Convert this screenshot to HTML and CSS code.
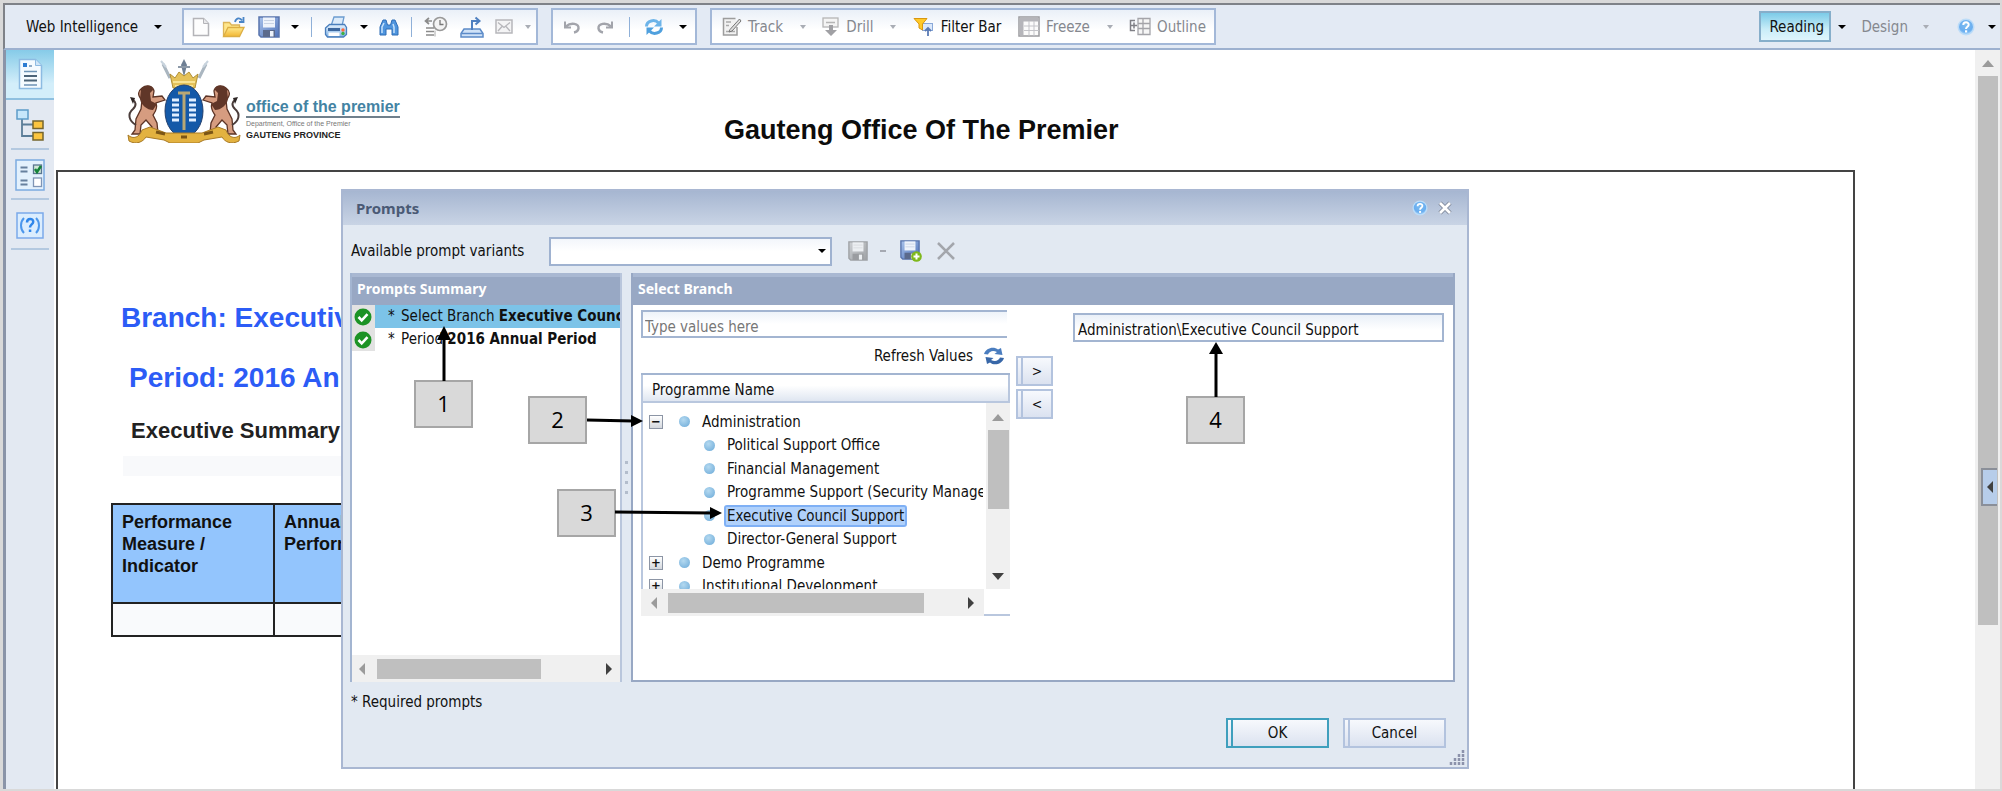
FILE: index.html
```html
<!DOCTYPE html>
<html lang="en">
<head>
    <meta charset="UTF-8">
    <meta name="viewport" content="width=device-width, initial-scale=1.0">
    <title>Web Intelligence</title>
    <link rel="stylesheet" href="styles.css">
</head>
<body>
    <svg class="defs" aria-hidden="true">
        <defs>
            <linearGradient id="blueFill" x1="0" y1="0" x2="0" y2="1">
                <stop offset="0" stop-color="#e4f1fd"/>
                <stop offset="1" stop-color="#7fb2e6"/>
            </linearGradient>
            <linearGradient id="goldFill" x1="0" y1="0" x2="0" y2="1">
                <stop offset="0" stop-color="#ffe98c"/>
                <stop offset="1" stop-color="#f2b632"/>
            </linearGradient>
            <linearGradient id="floppyFill" x1="0" y1="0" x2="1" y2="1">
                <stop offset="0" stop-color="#a9c3ec"/>
                <stop offset="1" stop-color="#4f72b8"/>
            </linearGradient>
            <radialGradient id="helpFill" cx="0.5" cy="0.35" r="0.7">
                <stop offset="0" stop-color="#7dbcf0"/>
                <stop offset="0.7" stop-color="#6aaef0"/>
                <stop offset="1" stop-color="#b5dcfb"/>
            </radialGradient>
        </defs>
        <symbol id="help" viewBox="0 0 18 18">
            <circle cx="9" cy="9" r="8.5" fill="#bcdcf8"/>
            <circle cx="9" cy="9" r="7" fill="url(#helpFill)"/>
            <path d="M6.3 7c0-3.6 5.6-3.4 5.4-.2C11.6 8.800 9 8.800 9 11" fill="none" stroke="#fff" stroke-width="2"/>
            <rect x="8" y="12.300" width="2.200" height="2.200" fill="#fff"/>
        </symbol>
        <symbol id="check" viewBox="0 0 18 18">
            <circle cx="9" cy="9" r="8.500" fill="#1c9325"/>
            <path d="M4.500 9l3.200 3.300L13.500 6.200" fill="none" stroke="#fff" stroke-width="2.600"/>
        </symbol>
        <symbol id="floppy" viewBox="0 0 22 22">
            <path d="M1 1h20v20H3l-2-2z" fill="url(#floppyFill)" stroke="#5874ad" stroke-width="1.500"/>
            <rect x="5" y="1.500" width="12" height="10" fill="#eef3fb"/>
            <path d="M6 4.500h10M6 7.500h10" stroke="#c9d3e4"/>
            <rect x="5" y="14" width="12" height="7" fill="#5b6a8c"/>
            <rect x="12" y="15" width="3.500" height="5.500" fill="#eef3fb"/>
        </symbol>
    </svg>

    <div class="app">
        <header class="toolbar">
            <button class="menu-button">Web Intelligence <span class="caret"></span></button>

            <div class="group group-file">
                <button class="tool" aria-label="New">
                    <svg width="18" height="20" viewBox="0 0 18 20"><path d="M1.500 1.500h10l5 5v12h-15z" fill="#fdfdfd" stroke="#b4b4b8" stroke-width="1.500"/><path d="M11.500 1.500v5h5" fill="#e8e8ea" stroke="#b4b4b8"/></svg>
                </button>
                <button class="tool" aria-label="Open">
                    <svg width="24" height="22" viewBox="0 0 24 22"><path d="M1.500 20V6.500h6l2 2.500h8v3" fill="#ffe68a" stroke="#dcb458" stroke-width="1.300"/><path d="M1.500 20.500l4.500-9h16l-4.500 9z" fill="url(#goldFill)" stroke="#dcae44" stroke-width="1.300"/><path d="M13 6c1-4 5-5 7-1.500M21.500 1v5h-4.500" fill="none" stroke="#4a86c8" stroke-width="1.800"/></svg>
                </button>
                <button class="tool" aria-label="Save"><svg width="22" height="22"><use href="#floppy"/></svg></button>
                <button class="tool tool-caret" aria-label="Save options"><span class="caret"></span></button>
                <span class="sep"></span>
                <button class="tool" aria-label="Print">
                    <svg width="24" height="22" viewBox="0 0 24 22"><path d="M7 10l3-9h10l-2 9z" fill="#dcebfa" stroke="#6b9cd0" stroke-width="1.300"/><path d="M1.500 12l4-3.500h15l2 3v7l-3 2.500H3.500l-2-2.500z" fill="url(#blueFill)" stroke="#4a7fbd" stroke-width="1.300"/><rect x="4" y="12" width="12" height="3" fill="#3d689f"/><rect x="4.500" y="16.500" width="11" height="3.500" fill="#fff"/><circle cx="19" cy="14" r="1.700" fill="#ff6a3c"/><circle cx="19" cy="17.500" r="1.700" fill="#3cb043"/></svg>
                </button>
                <button class="tool tool-caret" aria-label="Print options"><span class="caret"></span></button>
                <button class="tool" aria-label="Find">
                    <svg width="20" height="18" viewBox="0 0 20 18"><path d="M1 17V9l3-7h3l1.500 5h3L13 2h3l3 7v8h-6v-6H7v6z" fill="#4f95de" stroke="#2f6cb5"/><path d="M3 15V9l2-4M15 15V9l-1-3" stroke="#c7e2fb" stroke-width="1.500" fill="none"/></svg>
                </button>
                <span class="sep"></span>
                <button class="tool" aria-label="History">
                    <svg width="24" height="22" viewBox="0 0 24 22"><circle cx="16" cy="8" r="6.500" fill="#f4f4f4" stroke="#999" stroke-width="1.700"/><path d="M16 4v4.500h3.500" fill="none" stroke="#777" stroke-width="1.300"/><path d="M1 5h7M5 2L1.500 5 5 8M2 12h8M2 15.500h8M2 19h8" fill="none" stroke="#8b8b8b" stroke-width="1.700"/><path d="M11 20.500v-6" stroke="#aaa"/></svg>
                </button>
                <button class="tool" aria-label="Export">
                    <svg width="24" height="22" viewBox="0 0 24 22"><path d="M4 13h16l3 4.500v3.500H1v-3.500z" fill="#cfe2f7" stroke="#5c8bc8" stroke-width="1.500"/><path d="M1.500 17.500h21" stroke="#5c8bc8" stroke-width="1.500"/><path d="M12 14V5h7M15.500 1.500L19.500 5l-4 3.500" fill="none" stroke="#4f80c0" stroke-width="2"/></svg>
                </button>
                <button class="tool" aria-label="Mail" disabled>
                    <svg width="18" height="15" viewBox="0 0 18 15"><rect x="1" y="1" width="16" height="13" fill="#f4f4f5" stroke="#b6b6ba" stroke-width="1.500"/><path d="M3 3.500l6 5 6-5M3 12l4-4.500M15 12l-4-4.500" fill="none" stroke="#b6b6ba" stroke-width="1.300"/></svg>
                </button>
                <button class="tool tool-caret" aria-label="Mail options" disabled><span class="caret"></span></button>
            </div>

            <div class="group group-edit">
                <button class="tool" aria-label="Undo" disabled>
                    <svg width="18" height="14" viewBox="0 0 18 14"><path d="M3 6.500C8 2 16 3.500 15.500 8.500c-.3 2-2 3.500-4.500 4" fill="none" stroke="#a2a4ab" stroke-width="2.400"/><path d="M2 1.500v6h6" fill="none" stroke="#a2a4ab" stroke-width="2"/></svg>
                </button>
                <button class="tool" aria-label="Redo" disabled>
                    <svg width="18" height="14" viewBox="0 0 18 14"><path d="M15 6.500C10 2 2 3.500 2.500 8.500c.3 2 2 3.500 4.500 4" fill="none" stroke="#a2a4ab" stroke-width="2.400"/><path d="M16 1.500v6h-6" fill="none" stroke="#a2a4ab" stroke-width="2"/></svg>
                </button>
                <span class="sep"></span>
                <button class="tool" aria-label="Refresh">
                    <svg width="20" height="18" viewBox="0 0 20 18"><path d="M2.500 8.500C2.500 2.500 11 .8 14.500 5" fill="none" stroke="#6db4e9" stroke-width="3"/><path d="M17.500 1v7.500H10z" fill="#6db4e9"/><path d="M17.500 9.500c0 6-8.500 7.700-12 3.500" fill="none" stroke="#4fa0de" stroke-width="3"/><path d="M2.500 17V9.500H10z" fill="#4fa0de"/></svg>
                </button>
                <button class="tool tool-caret" aria-label="Refresh options"><span class="caret"></span></button>
            </div>

            <div class="group group-view">
                <button class="tool tool-text" disabled>
                    <svg width="20" height="19" viewBox="0 0 20 19"><path d="M15 10v8H1.500V1.500h12" fill="#f2f2f2" stroke="#9d9d9d" stroke-width="1.500"/><path d="M4 5h5M4 8.500h3M4 14.500h9" stroke="#aaa" stroke-width="1.500"/><path d="M17.500 2L8 12.500l-1 2.500 3-1L19 4z" fill="#dedede" stroke="#777"/></svg>
                    Track
                </button>
                <button class="tool tool-caret" aria-label="Track options" disabled><span class="caret"></span></button>
                <button class="tool tool-text" disabled>
                    <svg width="18" height="20" viewBox="0 0 18 20"><rect x="1" y="1" width="15" height="9" fill="#f4f4f4" stroke="#b5b5b5" stroke-width="1.300"/><path d="M4 5.500h9" stroke="#b5b5b5" stroke-width="1.500"/><path d="M7 8h4v5h4l-6 6-6-6h4z" fill="#a0a0a4"/></svg>
                    Drill
                </button>
                <button class="tool tool-caret" aria-label="Drill options" disabled><span class="caret"></span></button>
                <button class="tool tool-text">
                    <svg width="22" height="20" viewBox="0 0 22 20"><rect x="9.500" y="6.500" width="10" height="7" fill="#dbe8fa" stroke="#89a8d8"/><path d="M15 19v-8M12 14l3-3 3 3" fill="none" stroke="#5a7ab5" stroke-width="1.800"/><path d="M1 1.500h13L9.500 7v6L6 11V7z" fill="#ffc928" stroke="#d9970f"/></svg>
                    Filter Bar
                </button>
                <button class="tool tool-text" disabled>
                    <svg width="22" height="21" viewBox="0 0 22 21"><rect x="1" y="1" width="20" height="19" fill="#fbfbfb" stroke="#9a9a9e" stroke-width="1.500"/><path d="M1.500 1.500h19v4h-15v14h-4z" fill="#b5b5ba"/><path d="M6 10h15M6 14.500h15M11 5v15M16 5v15" stroke="#c3c3c8"/></svg>
                    Freeze
                </button>
                <button class="tool tool-caret" aria-label="Freeze options" disabled><span class="caret"></span></button>
                <button class="tool tool-text" disabled>
                    <svg width="22" height="19" viewBox="0 0 22 19"><path d="M6 3.500H1.500v10H6M2 8.500h6M5 5.500v6" fill="none" stroke="#808086" stroke-width="1.500"/><path d="M9 1.500h12v5H9zM9 6.500h12v5H9zM9 11.500h12v6H9zM14 1.500v16" fill="#f6f6f6" stroke="#a4a4a9" stroke-width="1.300"/></svg>
                    Outline
                </button>
            </div>

            <div class="modes">
                <button class="mode mode-active">Reading</button>
                <button class="tool tool-caret" aria-label="Reading options"><span class="caret"></span></button>
                <button class="mode" disabled>Design</button>
                <button class="tool tool-caret" aria-label="Design options" disabled><span class="caret"></span></button>
                <button class="tool help-tool" aria-label="Help"><svg width="18" height="18"><use href="#help"/></svg></button>
                <button class="tool tool-caret" aria-label="Help options"><span class="caret"></span></button>
            </div>
        </header>

        <div class="workspace">
            <nav class="rail">
                <button class="rail-button rail-active" aria-label="Report">
                    <svg width="25" height="32" viewBox="0 0 25 32"><path d="M1.500 1.500h16l6 6v23h-22z" fill="#f5fbff" stroke="#8dbbe2" stroke-width="1.500"/><path d="M17.500 1.500v6h6" fill="#cfe6f8" stroke="#8dbbe2"/><rect x="5" y="5" width="4" height="4" fill="#2d7dd2"/><path d="M11 8h3M6 13.500h13M6 27h13" stroke="#6d93b5" stroke-width="1.500"/><path d="M6 18h13M6 22.500h13" stroke="#4c6478" stroke-width="1.800"/></svg>
                </button>
                <button class="rail-button" aria-label="Navigation map">
                    <svg width="28" height="32" viewBox="0 0 28 32"><path d="M6 10v17h11M6 15.500h11" fill="none" stroke="#5a7d98" stroke-width="1.800"/><rect x="1" y="1" width="11" height="9" fill="#c7e7fb" stroke="#5d9cc9" stroke-width="1.500"/><rect x="17" y="12" width="10" height="7.500" fill="#fbc540" stroke="#75652e" stroke-width="1.500"/><rect x="17" y="23.500" width="10" height="7.500" fill="#fbc540" stroke="#75652e" stroke-width="1.500"/></svg>
                </button>
                <button class="rail-button" aria-label="Input controls">
                    <svg width="30" height="32" viewBox="0 0 30 32"><rect x="1" y="1" width="28" height="30" fill="#e3f1fd" stroke="#7cabe0" stroke-width="1.500"/><path d="M5.500 8.500h7M5.500 12.500h7M5.500 21.500h7M5.500 25.500h7" stroke="#66809e" stroke-width="1.800"/><rect x="18.500" y="6" width="8" height="8.500" fill="#cfe8d6" stroke="#5a7690" stroke-width="1.300"/><path d="M20 10l2 3 4-6" fill="none" stroke="#15833a" stroke-width="2.500"/><rect x="18.500" y="19" width="8" height="8.500" fill="#fff" stroke="#7f95b5" stroke-width="1.300"/></svg>
                </button>
                <button class="rail-button" aria-label="Prompt input">
                    <svg width="28" height="27" viewBox="0 0 28 27"><rect x="1" y="1" width="26" height="25" fill="#dbedfe" stroke="#7ba9ea" stroke-width="1.500"/><path d="M8 6c-4 4-4 11 0 15M20 6c4 4 4 11 0 15" fill="none" stroke="#4c97ec" stroke-width="2"/><path d="M11 10.500c0-5 6.500-4.500 6.200-.5-.2 2.500-3.200 2.500-3.200 5.500" fill="none" stroke="#2f86ea" stroke-width="2.500"/><rect x="12.800" y="17.500" width="2.500" height="2.500" fill="#2f86ea"/></svg>
                </button>
            </nav>

            <main class="report">
                <div class="report-head">
                    <div class="logo">
                        <svg width="114" height="84" viewBox="0 0 114 84">
                            <!-- spear and clubs -->
                            <path d="M36 5l7 14M79 5l-7 14" stroke="#aab6c0" stroke-width="3"/>
                            <path d="M34 2l5 6M81 2l-5 6" stroke="#c9d4de" stroke-width="2"/>
                            <path d="M57 0l3 6-3 12-3-12z" fill="#6e7f94"/>
                            <path d="M51 8h12" stroke="#8c99a8" stroke-width="2"/>
                            <!-- crown -->
                            <path d="M43 15l5 4 4-6 5 4 5-4 4 6 5-4-3 14H46z" fill="#e5c25a" stroke="#b08f35"/>
                            <path d="M46 23h22M48 27h18" stroke="#fff0a8" stroke-width="1.500"/>
                            <!-- lions -->
                            <g id="lion">
                                <path d="M15 29c5-4 11-2 12 3l-1 6 9-1 3 4-9 3c2 6-1 9-3 12l4 8 1 10h-7l1-6-6-7-5 5-1 9h-8l3-4 1-11 5-10 1-9c-5-5-4-9 0-12z" fill="#d69c80" stroke="#5c3426" stroke-width="1.300"/>
                                <path d="M14 30c4-5 12-4 12 1l-3 3 1 8 6 3-4 6c-6 0-12-5-13-11z" fill="#603628"/>
                                <path d="M9 66c-7-4-9-11-3-16 4-4 3-7-1-10" fill="none" stroke="#4a3c3a" stroke-width="2"/>
                                <path d="M3 38l5 1-2 6z" fill="#2d2524"/>
                            </g>
                            <use href="#lion" transform="matrix(-1 0 0 1 114 0)"/>
                            <!-- shield -->
                            <ellipse cx="57" cy="52" rx="19" ry="26" fill="#1459a8" stroke="#24416e"/>
                            <path d="M51 34h12M57 34v37" stroke="#b8a875" stroke-width="3"/>
                            <path d="M45 41h7M45 46h7M45 51h7M45 56h7M45 61h7M62 41h7M62 46h7M62 51h7M62 56h7M62 61h7" stroke="#e1efff" stroke-width="3"/>
                            <!-- ribbon -->
                            <path d="M1 76c5 5 12 2 14-5l8-3 16 6h36l16-6 8 3c2 7 9 10 14 5l-1 6c-8 4-14 1-17-4l-18 3-6 3H43l-6-3-18-3c-3 5-10 8-17 4z" fill="#e3b240" stroke="#a87a25"/>
                            <path d="M29 73l9 2M77 75l9-2M54 78h6" stroke="#7b5515" stroke-width="3"/>
                        </svg>
                        <div class="logo-text">
                            <strong>office of the premier</strong>
                            <span>Department, Office of the Premier</span>
                            <b>GAUTENG PROVINCE</b>
                        </div>
                    </div>
                    <h1>Gauteng Office Of The Premier</h1>
                </div>
                <div class="report-body">
                    <h2>Branch: Executive Council Support</h2>
                    <h2 class="period">Period: 2016 Annual Period</h2>
                    <h3>Executive Summary</h3>
                    <div class="band"></div>
                    <table class="measures">
                        <tr><th>Performance Measure / Indicator</th><th>Annual Performance</th></tr>
                        <tr><td></td><td></td></tr>
                    </table>
                </div>
            </main>

            <div class="page-scroll">
                <span class="tri tri-up tri-dim"></span>
                <div class="page-thumb"></div>
                <button class="side-handle" aria-label="Expand panel"><span class="tri tri-left"></span></button>
            </div>
        </div>
    </div>

    <section class="dialog" role="dialog" aria-labelledby="dialogTitle">
        <div class="dialog-title">
            <span id="dialogTitle">Prompts</span>
            <button class="tool" aria-label="Help"><svg width="16" height="16"><use href="#help"/></svg></button>
            <button class="tool" aria-label="Close"><svg width="14" height="14" viewBox="0 0 14 14"><path d="M2 2l10 10M12 2L2 12" stroke="#7d8698" stroke-width="4.500"/><path d="M2 2l10 10M12 2L2 12" stroke="#fff" stroke-width="2.800"/></svg></button>
        </div>

        <div class="variants">
            <label for="variant">Available prompt variants</label>
            <div class="select-box">
                <select id="variant"><option></option></select>
                <span class="caret"></span>
            </div>
            <button class="tool variant-save" aria-label="Save variant" disabled><svg width="20" height="22" class="gray"><use href="#floppy"/></svg></button>
            <span class="dash"></span>
            <button class="tool variant-new" aria-label="Save as new variant">
                <svg width="22" height="22" viewBox="0 0 22 22"><use href="#floppy" width="20" height="20"/><circle cx="16.500" cy="16.500" r="5.300" fill="#7fb81c"/><path d="M13.500 16.500h6M16.500 13.500v6" stroke="#fff" stroke-width="2"/></svg>
            </button>
            <button class="tool" aria-label="Delete variant" disabled><svg width="20" height="18" viewBox="0 0 20 18"><path d="M2 1l16 16M18 1L2 17" stroke="#a3a6ac" stroke-width="2.500"/></svg></button>
        </div>

        <div class="panels">
            <div class="summary">
                <h4 class="panel-head">Prompts Summary</h4>
                <ul class="prompt-list">
                    <li class="selected"><span class="status"><svg width="18" height="18"><use href="#check"/></svg></span><span class="prompt"><i>*</i> Select Branch <b>Executive Council Support</b></span></li>
                    <li><span class="status"><svg width="18" height="18"><use href="#check"/></svg></span><span class="prompt"><i>*</i> Period <b>2016 Annual Period</b></span></li>
                </ul>
                <div class="hscroll">
                    <span class="tri tri-left tri-dim"></span>
                    <div class="hthumb summary-thumb"></div>
                    <span class="tri tri-right"></span>
                </div>
            </div>

            <div class="splitter"><i></i><i></i><i></i><i></i></div>

            <div class="details">
                <h4 class="panel-head">Select Branch</h4>
                <div class="details-body">
                    <div class="chooser">
                        <input class="value-input" type="text" placeholder="Type values here" aria-label="Type values here">
                        <button class="refresh-values">Refresh Values
                            <svg width="22" height="18" viewBox="0 0 22 18"><path d="M1 7C3 .5 11-1 15 2.500L18 1l1.500 7-8-1L14 5C10 3 6.500 4 5 7.500z" fill="#4a7dbf"/><path d="M21 11c-2 6.500-10 8-14 4.500L4 17l-1.500-7 8 1L8 13c4 2 7.500 1 9-2.500z" fill="#3867a8"/></svg>
                        </button>
                        <div class="list">
                            <div class="list-head">Programme Name</div>
                            <div class="list-view">
                                <ul class="tree">
                                    <li><button class="toggle" aria-label="Collapse">−</button><i class="dot"></i><span>Administration</span></li>
                                    <li class="child"><i class="dot"></i><span>Political Support Office</span></li>
                                    <li class="child"><i class="dot"></i><span>Financial Management</span></li>
                                    <li class="child"><i class="dot"></i><span>Programme Support (Security Management)</span></li>
                                    <li class="child picked"><i class="dot"></i><span>Executive Council Support</span></li>
                                    <li class="child"><i class="dot"></i><span>Director-General Support</span></li>
                                    <li><button class="toggle" aria-label="Expand">+</button><i class="dot"></i><span>Demo Programme</span></li>
                                    <li><button class="toggle" aria-label="Expand">+</button><i class="dot"></i><span>Institutional Development</span></li>
                                </ul>
                                <div class="vscroll">
                                    <span class="tri tri-up tri-dim"></span>
                                    <div class="vthumb"></div>
                                    <span class="tri tri-down"></span>
                                </div>
                            </div>
                            <div class="list-foot">
                                <div class="hscroll">
                                    <span class="tri tri-left tri-dim"></span>
                                    <div class="hthumb list-thumb"></div>
                                    <span class="tri tri-right"></span>
                                </div>
                                <div class="corner"></div>
                            </div>
                        </div>
                    </div>
                    <div class="movers">
                        <button class="button" aria-label="Add">&gt;</button>
                        <button class="button" aria-label="Remove">&lt;</button>
                    </div>
                    <div class="chosen">
                        <input type="text" value="Administration\Executive Council Support" aria-label="Selected values">
                    </div>
                </div>
            </div>
        </div>

        <p class="required">* Required prompts</p>
        <div class="dialog-buttons">
            <button class="button button-ok">OK</button>
            <button class="button">Cancel</button>
        </div>
        <svg class="grip" width="16" height="16" viewBox="0 0 16 16"><path d="M14 1v15M10 5v11M6 9v7M2 13v3" stroke="#8c92ab" stroke-width="2.500" stroke-dasharray="3 1"/></svg>
    </section>

    <!-- numbered callouts -->
    <div class="callout callout-1">1</div>
    <div class="callout callout-2">2</div>
    <div class="callout callout-3">3</div>
    <div class="callout callout-4">4</div>
    <svg class="arrow arrow-1" width="14" height="55" viewBox="0 0 14 55"><path d="M7 55V10" stroke="#000" stroke-width="3"/><path d="M0 14L7 0l7 14z"/></svg>
    <svg class="arrow arrow-2" width="56" height="14" viewBox="0 0 56 14"><path d="M0 6l46 1" stroke="#000" stroke-width="3"/><path d="M44 1l12 6-12 6z"/></svg>
    <svg class="arrow arrow-3" width="107" height="14" viewBox="0 0 107 14"><path d="M0 6l97 1" stroke="#000" stroke-width="3"/><path d="M95 1l12 6-12 6z"/></svg>
    <svg class="arrow arrow-4" width="14" height="55" viewBox="0 0 14 55"><path d="M7 55V10" stroke="#000" stroke-width="3"/><path d="M0 12L7 0l7 12z"/></svg>
</body>
</html>
```

FILE: styles.css
```css
* {
    box-sizing: border-box;
}
body {
    margin: 0;
    overflow: hidden;
    position: relative;
    height: 100vh;
    background-color: #d9d9d9;
    font-family: "DejaVu Sans Condensed", "DejaVu Sans", sans-serif;
    font-size: 15px;
    color: #111;
}
button, input, select {
    font: inherit;
    color: inherit;
    margin: 0;
}
button {
    padding: 0;
    border: none;
    background: none;
    cursor: pointer;
}
button:disabled {
    color: #85888f;
}
ul {
    list-style: none;
    margin: 0;
    padding: 0;
}
svg {
    display: block;
    flex: none;
}
.defs {
    position: absolute;
    width: 0;
    height: 0;
}
.app {
    display: flex;
    flex-direction: column;
    height: 100vh;
    padding: 3px 2px 2px 3px;
}

/* Small triangles */
.caret {
    display: inline-block;
    border: 4px solid transparent;
    border-top: 4px solid #000;
    border-bottom: none;
}
button:disabled .caret {
    border-top-color: #a9adb5;
    border-left-width: 3px;
    border-right-width: 3px;
}
.tri {
    flex: none;
    width: 0;
    height: 0;
    border: 6px solid transparent;
    color: #404040;
}
.tri-dim {
    color: #9b9b9b;
}
.tri-up {
    border-bottom: 7px solid;
    border-top: none;
}
.tri-down {
    border-top: 7px solid;
    border-bottom: none;
}
.tri-left {
    border-right: 6px solid;
    border-left: none;
}
.tri-right {
    border-left: 6px solid;
    border-right: none;
}

/* Toolbar */
.toolbar {
    display: flex;
    align-items: center;
    height: 47px;
    flex: none;
    border-top: 2px solid #7f8288;
    border-left: 2px solid #7f8288;
    border-bottom: 2px solid #9db1cf;
    background-color: #e3eaf4;
}
.menu-button {
    display: flex;
    align-items: center;
    gap: 16px;
    width: 177px;
    padding-left: 21px;
    white-space: nowrap;
}
.group {
    display: flex;
    align-items: center;
    height: 37px;
    border: 2px solid #a3b8d8;
    background: linear-gradient(#eaf0f8, #ffffff 60%);
    margin-right: 13px;
}
.tool {
    display: flex;
    align-items: center;
    justify-content: center;
    flex: none;
    white-space: nowrap;
}
.tool-text {
    gap: 6px;
}
.sep {
    width: 1px;
    height: 20px;
    background-color: #8fb0d8;
}
.group-file {
    width: 356px;
    justify-content: space-between;
    padding: 0 5px 0 8px;
}
.group-edit {
    width: 146px;
    justify-content: space-between;
    padding: 0 8px 0 10px;
}
.group-view {
    width: 506px;
    justify-content: space-between;
    padding: 0 8px 0 10px;
}
.modes {
    display: flex;
    align-items: center;
    margin-left: auto;
    gap: 7px;
    padding-right: 4px;
}
.mode {
    height: 31px;
    padding: 0 8px;
}
.mode-active {
    border: 2px solid #86aeca;
    background: linear-gradient(#7ccbe8, #c9edf8 60%, #dff5fc);
    width: 72px;
}
.help-tool {
    margin-left: 21px;
    margin-right: 6px;
}

/* Left rail */
.workspace {
    display: flex;
    flex: 1;
    min-height: 0;
    background-color: #fff;
}
.rail {
    width: 51px;
    flex: none;
    border-left: 3px solid #8a94a8;
    background-color: #e3e9f2;
}
.rail-button {
    display: flex;
    justify-content: center;
    align-items: center;
    width: 100%;
    height: 50px;
    position: relative;
}
.rail-button::after {
    content: "";
    position: absolute;
    left: 5px;
    right: 5px;
    bottom: 0;
    height: 2px;
    background-color: #b4c9e0;
}
.rail-active {
    border-bottom: 2px solid #8fc0e0;
    background: linear-gradient(#86cbe8, #d3eefa 70%);
}
.rail-active::after {
    display: none;
}

/* Report */
.report {
    display: flex;
    flex-direction: column;
    flex: 1;
    min-width: 0;
    padding-left: 2px;
}
.report-head {
    display: flex;
    height: 120px;
    flex: none;
    padding-left: 71px;
}
.logo {
    display: flex;
    width: 597px;
    gap: 5px;
    padding-top: 9px;
}
.logo-text {
    display: flex;
    flex-direction: column;
    padding-top: 39px;
    font-family: "Liberation Sans", Arial, sans-serif;
}
.logo-text strong {
    font-size: 16px;
    line-height: 18px;
    color: #4383a3;
    border-bottom: 2px solid #70808c;
}
.logo-text span {
    font-size: 7px;
    line-height: 12px;
    color: #777;
}
.logo-text b {
    font-size: 9px;
    line-height: 10px;
    color: #222;
}
h1, h2, h3 {
    margin: 0;
    font-family: "Liberation Sans", Arial, sans-serif;
    white-space: nowrap;
}
h1 {
    padding-top: 64px;
    font-size: 27px;
    line-height: 32px;
    color: #0c0c0c;
}
.report-body {
    flex: 1;
    min-height: 0;
    overflow: hidden;
    margin-right: 120px;
    border: 2px solid #444;
    border-bottom: none;
    padding: 130px 0 0 53px;
}
h2 {
    padding-left: 10px;
    font-size: 28px;
    line-height: 32px;
    color: #2c5cf6;
}
.period {
    padding: 28px 0 0 18px;
}
h3 {
    padding: 24px 0 0 20px;
    font-size: 22px;
    line-height: 26px;
    color: #222;
}
.band {
    height: 20px;
    width: 260px;
    margin: 12px 0 27px 12px;
    background-color: #f8f9fb;
}
.measures {
    width: 326px;
    table-layout: fixed;
    border-collapse: collapse;
    font-family: "Liberation Sans", Arial, sans-serif;
    font-size: 18px;
    line-height: 22px;
}
.measures th, .measures td {
    border: 2px solid #222;
    vertical-align: top;
    text-align: left;
    padding: 6px 9px;
    color: #111;
}
.measures th {
    height: 99px;
    background-color: #93c5fd;
}
.measures td {
    height: 33px;
    background-color: #f9fafc;
}

/* Page scrollbar */
.page-scroll {
    display: flex;
    flex-direction: column;
    align-items: center;
    width: 25px;
    padding-top: 10px;
    gap: 9px;
    background-color: #f0f0f0;
    position: relative;
}
.page-thumb {
    width: 20px;
    height: 549px;
    background-color: #bfbfbf;
}
.side-handle {
    position: absolute;
    top: 418px;
    left: 6px;
    width: 16px;
    height: 38px;
    display: flex;
    align-items: center;
    justify-content: center;
    border: 2px solid #8a8f99;
    border-right: none;
    background-color: #b7cdea;
}

/* Dialog */
.dialog {
    position: absolute;
    top: 189px;
    left: 341px;
    width: 1128px;
    height: 580px;
    display: flex;
    flex-direction: column;
    border: 2px solid #a9b7d2;
    background-color: #e2e9f2;
}
.dialog-title {
    display: flex;
    align-items: center;
    height: 34px;
    flex: none;
    gap: 10px;
    padding: 0 15px 0 13px;
    background: linear-gradient(#a6b6d1, #c9d4e5);
    font-family: "Noto Sans", sans-serif;
    font-weight: bold;
    color: #4a5a75;
}
.dialog-title span {
    flex: 1;
}
.variants {
    display: flex;
    align-items: center;
    height: 48px;
    padding: 4px 0 0 8px;
}
.variants label {
    width: 198px;
}
.select-box {
    position: relative;
    width: 283px;
    height: 29px;
}
.select-box select {
    appearance: none;
    width: 100%;
    height: 100%;
    border: 2px solid #9fb2d0;
    border-radius: 0;
    background: linear-gradient(#f3f6fb, #fff 50%);
}
.select-box .caret {
    position: absolute;
    right: 6px;
    top: 12px;
}
.variant-save {
    margin: 0 12px 0 16px;
}
.gray {
    filter: grayscale(1) opacity(0.6);
}
.dash {
    width: 6px;
    height: 2px;
    background-color: #a5a9b2;
}
.variant-new {
    margin: 0 14px;
}
.panels {
    display: flex;
    height: 409px;
    padding: 0 12px 0 7px;
}
.summary {
    display: flex;
    flex-direction: column;
    width: 272px;
    border-left: 2px solid #a3b5d1;
    border-right: 2px solid #b9c6dc;
    background-color: #fff;
}
.panel-head {
    flex: none;
    height: 32px;
    margin: 0;
    padding-left: 5px;
    border-top: 4px solid #a9b8d2;
    background-color: #98a8c4;
    font-family: "Noto Sans", sans-serif;
    font-size: 14px;
    line-height: 24px;
    color: #fff;
}
.prompt-list {
    flex: 1;
    overflow: hidden;
}
.prompt-list li {
    display: flex;
    height: 23px;
    line-height: 23px;
    white-space: nowrap;
}
.status {
    display: flex;
    align-items: center;
    flex: none;
    width: 23px;
    padding-left: 2px;
    background-color: #e2e2e2;
}
.prompt {
    flex: 1;
    overflow: hidden;
    padding-left: 13px;
}
.prompt i {
    font-style: normal;
    margin-right: 2px;
}
.selected .prompt {
    background-color: #7cc3e8;
}
.hscroll {
    display: flex;
    align-items: center;
    justify-content: space-between;
    height: 27px;
    background-color: #f0f0f0;
}
.hthumb {
    height: 20px;
    background-color: #bfbfbf;
    margin-right: auto;
}
.summary .hscroll {
    padding: 0 8px 0 7px;
}
.summary-thumb {
    width: 164px;
    margin-left: 12px;
}
.splitter {
    display: flex;
    flex-direction: column;
    align-items: center;
    justify-content: center;
    gap: 7px;
    width: 9px;
}
.splitter i {
    width: 3px;
    height: 3px;
    background-color: #b3bdcc;
}
.details {
    display: flex;
    flex-direction: column;
    flex: 1;
    border: 2px solid #98a8c4;
    border-top: none;
    background-color: #fff;
}
.details-body {
    display: flex;
    padding: 5px 9px 0 8px;
}
.chooser {
    display: flex;
    flex-direction: column;
    width: 369px;
}
.value-input {
    width: 366px;
    height: 28px;
    padding: 5px 2px 0;
    border: 2px solid #a3b5d1;
    border-right: none;
    background: linear-gradient(#eef3f9, #fff 50%);
}
.value-input::placeholder {
    color: #777;
    opacity: 1;
}
.refresh-values {
    display: flex;
    align-items: center;
    align-self: flex-end;
    gap: 10px;
    height: 35px;
    margin-right: 5px;
}
.list {
    border-top: 2px solid #a3b5d1;
}
.list-head {
    height: 28px;
    padding-left: 9px;
    line-height: 30px;
    border: 2px solid #b9c7de;
    border-top: none;
    background: linear-gradient(#fff 40%, #dfe6f1);
}
.list-view {
    display: flex;
    height: 186px;
    overflow: hidden;
    border-left: 2px solid #b9c7de;
}
.tree {
    flex: 1;
    min-width: 0;
    display: flex;
    flex-direction: column;
    height: 195px;
    padding: 7px 3px 0 6px;
}
.tree li {
    display: flex;
    align-items: center;
    flex: 1;
    overflow: hidden;
    white-space: nowrap;
}
.toggle {
    flex: none;
    width: 14px;
    height: 14px;
    margin-right: 16px;
    border: 1px solid #8c95a5;
    background: linear-gradient(#fff, #d3d7dd);
    line-height: 10px;
    font-size: 13px;
    font-weight: bold;
}
.dot {
    flex: none;
    width: 11px;
    height: 11px;
    margin-right: 9px;
    border-radius: 50%;
    background: radial-gradient(circle at 40% 35%, #b4d9f0, #6aa9d8);
}
.tree span {
    padding: 0 3px;
}
.child {
    padding-left: 55px;
}
.tree .picked span {
    border: 2px solid #7fb0f5;
    padding: 0 1px;
    border-radius: 3px;
    background-color: #b0d1fb;
}
.vscroll {
    display: flex;
    flex-direction: column;
    align-items: center;
    width: 24px;
    padding: 11px 0 9px;
    background-color: #f0f0f0;
}
.vthumb {
    width: 21px;
    height: 79px;
    margin: 9px 0 auto;
    background-color: #bfbfbf;
}
.list-foot {
    display: flex;
}
.list-foot .hscroll {
    flex: 1;
    padding: 0 10px;
}
.list-thumb {
    width: 256px;
    margin-left: 11px;
}
.corner {
    width: 26px;
    border-bottom: 2px solid #b9c7de;
}
.movers {
    display: flex;
    flex-direction: column;
    gap: 3px;
    padding: 46px 20px 0 6px;
}
.movers .button {
    width: 37px;
    height: 30px;
    font-size: 14px;
    padding-left: 5px;
}
.button {
    width: 103px;
    height: 30px;
    position: relative;
    border: 2px solid #b3c3de;
    background: linear-gradient(#f7f9fd, #dbe2f0);
}
.button::before {
    content: "";
    position: absolute;
    top: 0;
    bottom: 0;
    left: 3px;
    width: 2px;
    background-color: #b3c3de;
}
.button-ok {
    border-color: #3f9fbd;
}
.button-ok::before {
    background-color: #3f9fbd;
}
.chosen {
    flex: 1;
    padding-top: 3px;
}
.chosen input {
    width: 100%;
    height: 29px;
    padding: 4px 3px 0;
    border: 2px solid #a3b5d1;
    background: linear-gradient(#eaf0f8, #fff 60%);
}
.required {
    margin: 9px 0 0 8px;
    line-height: 22px;
}
.dialog-buttons {
    display: flex;
    justify-content: flex-end;
    gap: 14px;
    padding: 5px 21px 0;
}
.grip {
    position: absolute;
    right: 2px;
    bottom: 2px;
}

/* Callouts */
.callout {
    position: absolute;
    width: 59px;
    height: 48px;
    border: 2px solid #a6a6a6;
    background-color: #d9d9d9;
    font-family: "Open Sans", "Noto Sans", sans-serif;
    font-size: 22px;
    line-height: 42px;
    text-align: center;
    color: #000;
}
.arrow {
    position: absolute;
}
.callout-1 {
    left: 414px;
    top: 380px;
}
.callout-2 {
    left: 528px;
    top: 396px;
}
.callout-3 {
    left: 557px;
    top: 489px;
}
.callout-4 {
    left: 1186px;
    top: 396px;
}
.arrow-1 {
    left: 437px;
    top: 326px;
}
.arrow-2 {
    left: 587px;
    top: 414px;
}
.arrow-3 {
    left: 615px;
    top: 506px;
}
.arrow-4 {
    left: 1209px;
    top: 342px;
}
```
